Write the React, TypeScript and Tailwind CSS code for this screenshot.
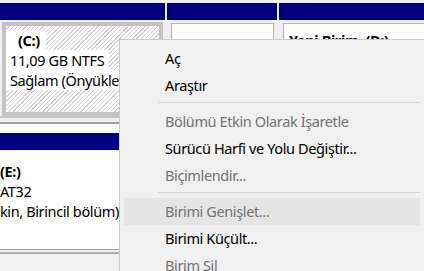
import React from "react";

const hatch =
  "bg-[image:repeating-linear-gradient(135deg,#ffffff_0px,#ffffff_2px,#d6d6d6_2px,#d6d6d6_3px)]";

type Item = { t?: string; d?: boolean; hl?: boolean; sep?: boolean };

const items: Item[] = [
  { t: "Aç" },
  { t: "Araştır" },
  { sep: true },
  { t: "Bölümü Etkin Olarak İşaretle", d: true },
  { t: "Sürücü Harfi ve Yolu Değiştir..." },
  { t: "Biçimlendir...", d: true },
  { sep: true },
  { t: "Birimi Genişlet...", d: true, hl: true },
  { t: "Birimi Küçült..." },
  { t: "Birim Sil", d: true },
];

export default function App() {
  return (
    <div className="relative w-[424px] h-[271px] overflow-hidden bg-[#f0f0f0] font-['Noto_Sans',sans-serif] text-[14.5px] leading-[20px] tracking-[-0.38px] text-black">
      {/* Disk row 1 */}
      <div className="flex gap-[2px] pt-[3px]">
        <div className="w-[165px] flex flex-col">
          <div className="h-[17px] bg-[#000080]" />
          <div className="px-[2px] pt-[2px]">
            <div className={`h-[94px] border-4 border-[#c4c4c4] ${hatch} pt-[4px] overflow-hidden`}>
              <div className="w-fit bg-white pl-[12px] pr-[6px] font-bold">(C:)</div>
              <div className="w-fit bg-white pl-[4px] pr-[5px] whitespace-nowrap">11,09 GB NTFS</div>
              <div className="w-fit bg-white pl-[4px] pr-[5px] whitespace-nowrap">Sağlam (Önyükleme, Sayfa Dosyası)</div>
            </div>
          </div>
        </div>
        <div className="w-[110px] flex flex-col">
          <div className="h-[17px] bg-[#000080]" />
          <div className="pl-[4px] pr-[3px] pt-[3px]">
            <div className="h-[93px] border border-[#b4b4b4] bg-white" />
          </div>
        </div>
        <div className="flex-1 flex flex-col">
          <div className="h-[17px] bg-[#000080]" />
          <div className="pl-[4px] pt-[3px]">
            <div className="h-[93px] border border-r-0 border-[#b4b4b4] bg-white pt-[6px] pl-[5px] font-bold whitespace-pre">
              Yeni Birim  (D:)
            </div>
          </div>
        </div>
      </div>
      <div className="h-[2px] bg-[#c4c4c4]" />
      <div className="h-[4px]" />
      <div className="h-[2px] bg-[#a0a0a0]" />
      <div className="h-[9px] bg-[#fafafa]" />
      {/* Disk row 2 */}
      <div className="h-[17px] bg-[#000080]" />
      <div className="mt-[1px] w-[120px] h-[99px] bg-white border-r border-b border-[#a0a0a0] pt-[10px] whitespace-nowrap overflow-hidden">
        <div className="font-bold">(E:)</div>
        <div>AT32</div>
        <div>kin, Birincil bölüm)</div>
      </div>
      <div className="h-[2px]" />
      <div className="h-[2px] bg-[#b0b0b0]" />

      {/* Context menu */}
      <div className="absolute left-[119px] top-[39px] w-[306px] h-[250px] bg-[#f0f0f0] border border-[#cccccc] pt-[5px] px-[4px]">
        {items.map((it, i) =>
          it.sep ? (
            <div key={i} className="h-[9px] pt-[3px] pl-[34px]">
              <div className="h-px bg-[#d5d5d5]" />
            </div>
          ) : (
            <div
              key={i}
              className={`h-[27px] leading-[27px] pl-[41px] whitespace-nowrap ${
                it.d ? "text-[#737373]" : "text-black"
              } ${it.hl ? "bg-[#e5e5e5]" : ""}`}
            >
              {it.t}
            </div>
          )
        )}
      </div>
    </div>
  );
}
